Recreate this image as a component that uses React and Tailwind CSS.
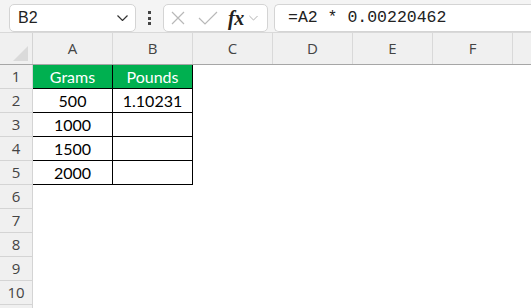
const cols = ['A', 'B', 'C', 'D', 'E', 'F', ''];

const data = [
  ['Grams', 'Pounds'],
  ['500', '1.10231'],
  ['1000', ''],
  ['1500', ''],
  ['2000', ''],
];

function Chevron({ className }) {
  return (
    <svg width="11" height="6" viewBox="0 0 11 6" className={className} fill="none">
      <path d="M0.5 0.5 L5.5 5.5 L10.5 0.5" stroke="currentColor" strokeWidth="1.2" />
    </svg>
  );
}

function Toolbar() {
  return (
    <div className="h-[32px] bg-[#f4f4f4] flex items-start pt-[4px] pl-[9px] gap-0">
      {/* name box */}
      <div className="w-[127px] h-[28px] bg-white border border-[#d4d4d4] rounded-[5px] flex items-center justify-between pl-[8px] pr-[7px]">
        <span className="text-[16px] text-[#222] font-['Liberation_Sans',sans-serif]">B2</span>
        <Chevron className="text-[#333]" />
      </div>
      {/* dots */}
      <div className="w-[27px] h-[28px] flex flex-col items-center justify-center gap-[2.5px]">
        <span className="w-[3px] h-[3px] bg-[#444]" />
        <span className="w-[3px] h-[3px] bg-[#444]" />
        <span className="w-[3px] h-[3px] bg-[#444]" />
      </div>
      {/* fx box */}
      <div className="w-[105px] h-[28px] bg-white border border-[#d4d4d4] rounded-[5px] flex items-center pl-[7px]">
        <svg width="14" height="14" viewBox="0 0 14 14" fill="none">
          <path d="M1 1 L13 13 M13 1 L1 13" stroke="#b8b8b8" strokeWidth="1.2" />
        </svg>
        <svg width="20" height="14" viewBox="0 0 20 14" fill="none" className="ml-[13px]">
          <path d="M1 7 L7 13 L19 1" stroke="#b8b8b8" strokeWidth="1.2" />
        </svg>
        <span className="ml-[10px] text-[20px] leading-none italic font-semibold font-['Liberation_Serif',serif] text-[#222] tracking-[-0.5px]">fx</span>
        <Chevron className="ml-[5px] text-[#b0b0b0] w-[9px]" />
      </div>
      {/* formula input */}
      <div className="ml-[6px] flex-1 h-[28px] bg-white border border-[#d4d4d4] border-r-0 rounded-l-[5px] flex items-center pl-[13px]">
        <span className="text-[16.5px] text-[#222] font-['Liberation_Mono',monospace] whitespace-pre">=A2 * 0.00220462</span>
      </div>
    </div>
  );
}

function Header() {
  return (
    <div className="flex h-[33px] bg-[#f0f0f0] border-t border-[#d9d9d9] border-b border-b-[#a6a6a6]">
      <div className="w-[33px] shrink-0 border-r border-[#d4d4d4] relative">
        <svg width="15" height="15" viewBox="0 0 15 15" className="absolute right-[4px] bottom-[3px]">
          <path d="M15 0 L15 15 L0 15 Z" fill="#dadada" />
        </svg>
      </div>
      {cols.map((c, i) => (
        <div
          key={i}
          className="w-[80px] shrink-0 border-r border-[#d9d9d9] flex items-center justify-center text-[15px] text-[#444] font-['Open_Sans',sans-serif]"
        >
          {c}
        </div>
      ))}
    </div>
  );
}

function Row({ n }) {
  const cells = data[n - 1];
  return (
    <div className="flex h-[24px]">
      <div className="w-[33px] shrink-0 bg-[#f0f0f0] border-r border-b border-[#d4d4d4] flex items-center justify-center text-[15px] text-[#444] font-['Open_Sans',sans-serif]">
        {n <= 10 ? n : ''}
      </div>
      {cols.map((c, i) => {
        const inTable = cells && i < 2;
        const header = n === 1 && inTable;
        return (
          <div
            key={i}
            className={
              'w-[80px] shrink-0 flex items-center justify-center text-[16px] font-["Lato",sans-serif] ' +
              (inTable ? 'border-r border-b border-black ' : '') +
              (header ? 'bg-[#00b050] text-white' : 'text-black')
            }
          >
            {inTable ? cells[i] : ''}
          </div>
        );
      })}
    </div>
  );
}

export default function App() {
  return (
    <div className="w-[531px] h-[308px] overflow-hidden bg-white">
      <Toolbar />
      <Header />
      {Array.from({ length: 11 }, (_, i) => (
        <Row key={i} n={i + 1} />
      ))}
    </div>
  );
}
